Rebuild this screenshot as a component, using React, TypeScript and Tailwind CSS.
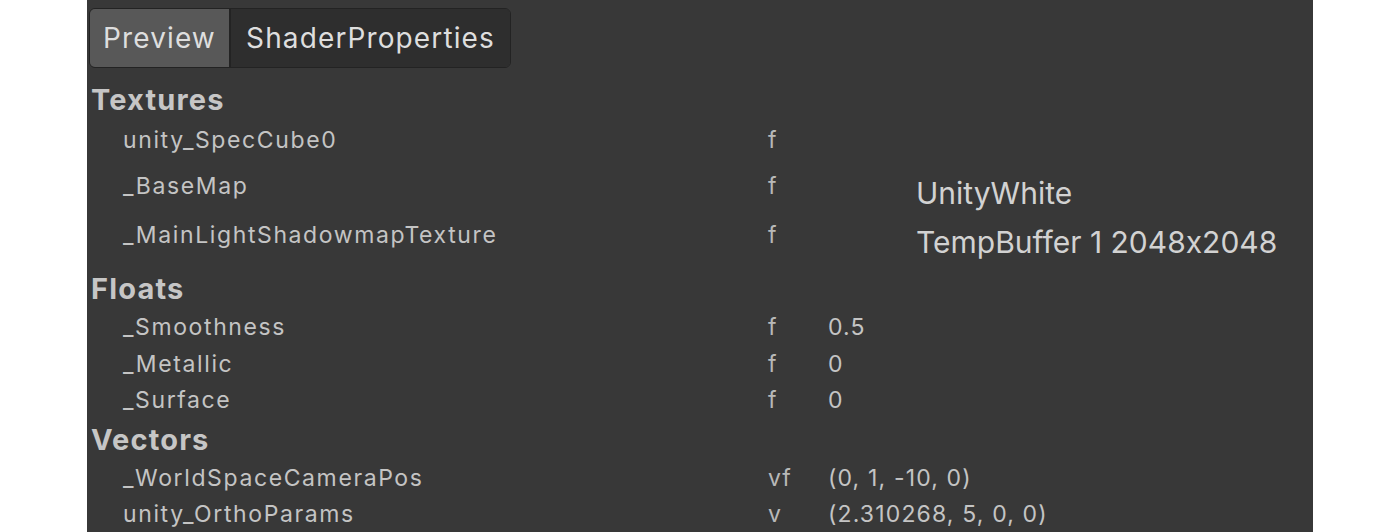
import React from "react";

type Row = { name: string; type: string; value?: string; big?: boolean; h: number };

const textures: Row[] = [
  { name: "unity_SpecCube0", type: "f", h: 44 },
  { name: "_BaseMap", type: "f", value: "UnityWhite", big: true, h: 48 },
  { name: "_MainLightShadowmapTexture", type: "f", value: "TempBuffer 1 2048x2048", big: true, h: 50 },
];
const floats: Row[] = [
  { name: "_Smoothness", type: "f", value: "0.5", h: 37 },
  { name: "_Metallic", type: "f", value: "0", h: 36 },
  { name: "_Surface", type: "f", value: "0", h: 37 },
];
const vectors: Row[] = [
  { name: "_WorldSpaceCameraPos", type: "vf", value: "(0, 1, -10, 0)", h: 36 },
  { name: "unity_OrthoParams", type: "v", value: "(2.310268, 5, 0, 0)", h: 36 },
];

function PropRow({ r }: { r: Row }) {
  return (
    <div className="flex items-center" style={{ height: r.h }}>
      <div className="w-[681px] pl-[36px] text-[23px] tracking-[0.07em] text-[#c4c4c4]">{r.name}</div>
      <div className="w-[60px] text-[23px] tracking-[0.04em] text-[#b8b8b8]">{r.type}</div>
      {r.big ? (
        <div className="pl-[88px] pt-[14px] text-[30px] text-[#d2d2d2] [font-feature-settings:'calt'_0]">{r.value}</div>
      ) : (
        <div className="text-[23px] tracking-[0.05em] text-[#c4c4c4]">{r.value}</div>
      )}
    </div>
  );
}

function Header({ title, h, pt }: { title: string; h: number; pt: string }) {
  return (
    <div className={`flex items-center pl-[4px] ${pt} text-[29px] font-bold tracking-[0.04em] text-[#c6c6c6]`} style={{ height: h }}>
      {title}
    </div>
  );
}

export default function App() {
  return (
    <div className="w-[1400px] h-[532px] bg-white overflow-hidden" style={{ fontFamily: "Inter, 'Noto Sans', sans-serif" }}>
      <div className="ml-[87px] w-[1226px] h-[532px] bg-[#383838] pt-[8px]">
        <div className="ml-[2px] flex w-[422px] h-[60px] rounded-[6px] border border-[#232323] overflow-hidden">
          <div className="w-[141px] bg-[#585858] border-r-2 border-[#232323] flex items-center justify-center text-[28px] tracking-[0.04em] text-[#dedede]">
            Preview
          </div>
          <div className="flex-1 bg-[#2e2e2e] flex items-center justify-center text-[28px] tracking-[0.04em] text-[#dedede]">
            ShaderProperties
          </div>
        </div>
        <div className="mt-[10px]">
          <Header title="Textures" h={40} pt="pt-[4px]" />
          {textures.map((r) => (
            <PropRow key={r.name} r={r} />
          ))}
          <Header title="Floats" h={49} pt="pt-[9px]" />
          {floats.map((r) => (
            <PropRow key={r.name} r={r} />
          ))}
          <Header title="Vectors" h={41} pt="pt-[0px]" />
          {vectors.map((r) => (
            <PropRow key={r.name} r={r} />
          ))}
        </div>
      </div>
    </div>
  );
}
